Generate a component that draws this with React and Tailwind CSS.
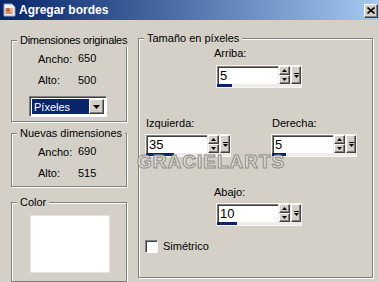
import React from 'react';

const raised = 'bg-[#d4d0c8] border-t border-l border-t-white border-l-white border-r border-b border-r-[#404040] border-b-[#404040] shadow-[inset_-1px_-1px_0_#808080]';
const etched = 'relative border border-[#808080] shadow-[1px_1px_0_#fff,inset_1px_1px_0_#fff]';

function Group({ title, className, titleClass = '', children }) {
    return (
        <div className={`${etched} ${className}`}>
            <span className={`absolute left-[5px] top-[-8px] px-[3px] leading-[14px] whitespace-nowrap bg-[#d4d0c8] ${titleClass}`}>{title}</span>
            {children}
        </div>
    );
}

function Arrow({ up }) {
    return (
        <svg width="5" height="3" viewBox="0 0 5 3">
            <path d={up ? 'M2.5 0 L5 3 L0 3 Z' : 'M0 0 L5 0 L2.5 3 Z'} fill="#000" />
        </svg>
    );
}

function Spin({ value, barClass }) {
    return (
        <div className="w-[86px] h-[23px] bg-[#efede9] border border-[#f7f6f3] flex flex-col">
            <div className="flex h-[18px]">
                <div className="flex-1 bg-white border-t border-l border-[#808080] shadow-[inset_1px_1px_0_#404040] pl-[2px] pt-[1px] text-[13px] leading-[16px]">{value}</div>
                <div className="w-[11px] flex flex-col ml-[1px]">
                    <div className={`${raised} h-[9px] flex items-center justify-center`}><Arrow up /></div>
                    <div className={`${raised} h-[9px] flex items-center justify-center`}><Arrow /></div>
                </div>
                <div className={`${raised} w-[10px] ml-[1px] flex flex-col items-center justify-center gap-[1px]`}>
                    <div className="w-[5px] h-[1px] bg-black" />
                    <Arrow />
                </div>
            </div>
            <div className="h-[3px]">
                <div className={`h-full bg-[#0a246a] ${barClass}`} />
            </div>
        </div>
    );
}

function Dims({ w, h }) {
    return (
        <div className="grid grid-cols-[40px_auto] gap-y-[7px] ml-[26px] leading-[14px]">
            <span>Ancho:</span>
            <span className="-mt-[1px]">{w}</span>
            <span>Alto:</span>
            <span>{h}</span>
        </div>
    );
}

export default function App() {
    return (
        <div className="relative w-[379px] h-[282px] bg-[#d4d0c8] overflow-hidden text-[11px] text-black" style={{ fontFamily: '"Liberation Sans", Arial, sans-serif' }}>
            <div className="h-[20px] flex items-center bg-gradient-to-r from-[#0a246a] to-[#a6caf0]">
                <svg width="14" height="14" viewBox="0 0 14 14" className="ml-[2px]">
                    <path d="M2 1 H10 L13 4 V13 H2 Z" fill="#f4f4f4" stroke="#8aa0c8" />
                    <rect x="3" y="5" width="8" height="6" fill="#e8b48a" />
                    <circle cx="6" cy="7" r="2" fill="#c0603a" />
                    <path d="M3 11 L7 8 L11 11 Z" fill="#d08a60" />
                </svg>
                <span className="ml-[3px] text-white font-bold text-[12px] leading-[14px]">Agregar bordes</span>
                <div className={`${raised} ml-auto mr-[1px] mt-[1px] w-[14px] h-[14px] flex items-center justify-center`}>
                    <svg width="8" height="7" viewBox="0 0 8 7">
                        <path d="M0.5 0.5 L7.5 6.5 M7.5 0.5 L0.5 6.5" stroke="#000" strokeWidth="1.6" />
                    </svg>
                </div>
            </div>

            <div className="flex pl-[11px]">
                <div className="w-[116px] mt-[20px] flex flex-col">
                    <Group title="Dimensiones originales" titleClass="tracking-[-0.3px]" className="h-[82px] pt-[11px]">
                        <Dims w="650" h="500" />
                        <div className="ml-[17px] mt-[9px] w-[78px] h-[21px] flex bg-white border-t border-l border-[#808080] border-b border-r border-b-white border-r-white shadow-[inset_1px_1px_0_#404040] p-[2px]">
                            <div className="flex-1 bg-[#0a246a] text-white pl-[2px] leading-[16px]">Píxeles</div>
                            <div className={`${raised} w-[15px] flex items-center justify-center`}>
                                <svg width="7" height="4" viewBox="0 0 7 4"><path d="M0 0 H7 L3.5 4 Z" fill="#000" /></svg>
                            </div>
                        </div>
                    </Group>
                    <Group title="Nuevas dimensiones" className="h-[54px] mt-[11px] pt-[11px]">
                        <Dims w="690" h="515" />
                    </Group>
                    <Group title="Color" className="h-[80px] mt-[15px] pt-[12px]">
                        <div className="ml-[18px] w-[80px] h-[58px] bg-white border border-[#e4e2de]" />
                    </Group>
                </div>

                <Group title="Tamaño en píxeles" className="w-[235px] h-[240px] mt-[18px] ml-[11px] pt-[7px] leading-[14px]">
                    <div className="ml-[75px]">Arriba:</div>
                    <div className="ml-[77px] mt-[5px]"><Spin value="5" barClass="w-[15px]" /></div>
                    <div className="flex mt-[28px]">
                        <div className="ml-[6px] w-[126px]">
                            <div className="pl-[1px]">Izquierda:</div>
                            <div className="mt-[4px]"><Spin value="35" barClass="w-[28px]" /></div>
                        </div>
                        <div>
                            <div className="pl-[1px]">Derecha:</div>
                            <div className="mt-[4px]"><Spin value="5" barClass="w-[14px]" /></div>
                        </div>
                    </div>
                    <div className="ml-[75px] mt-[28px]">Abajo:</div>
                    <div className="ml-[77px] mt-[4px]"><Spin value="10" barClass="w-[20px]" /></div>
                    <div className="flex items-center ml-[6px] mt-[13px]">
                        <div className="w-[13px] h-[13px] bg-white border-t border-l border-[#808080] border-b border-r border-b-white border-r-white shadow-[inset_1px_1px_0_#404040]" />
                        <span className="ml-[5px]">Simétrico</span>
                    </div>
                </Group>
            </div>

            <div className="absolute left-[137px] top-[152px] text-[19px] font-bold tracking-[1px] text-[#e4e2dc] [-webkit-text-stroke:1px_#8e8c88] leading-[20px]">GRACIELARTS</div>
        </div>
    );
}
